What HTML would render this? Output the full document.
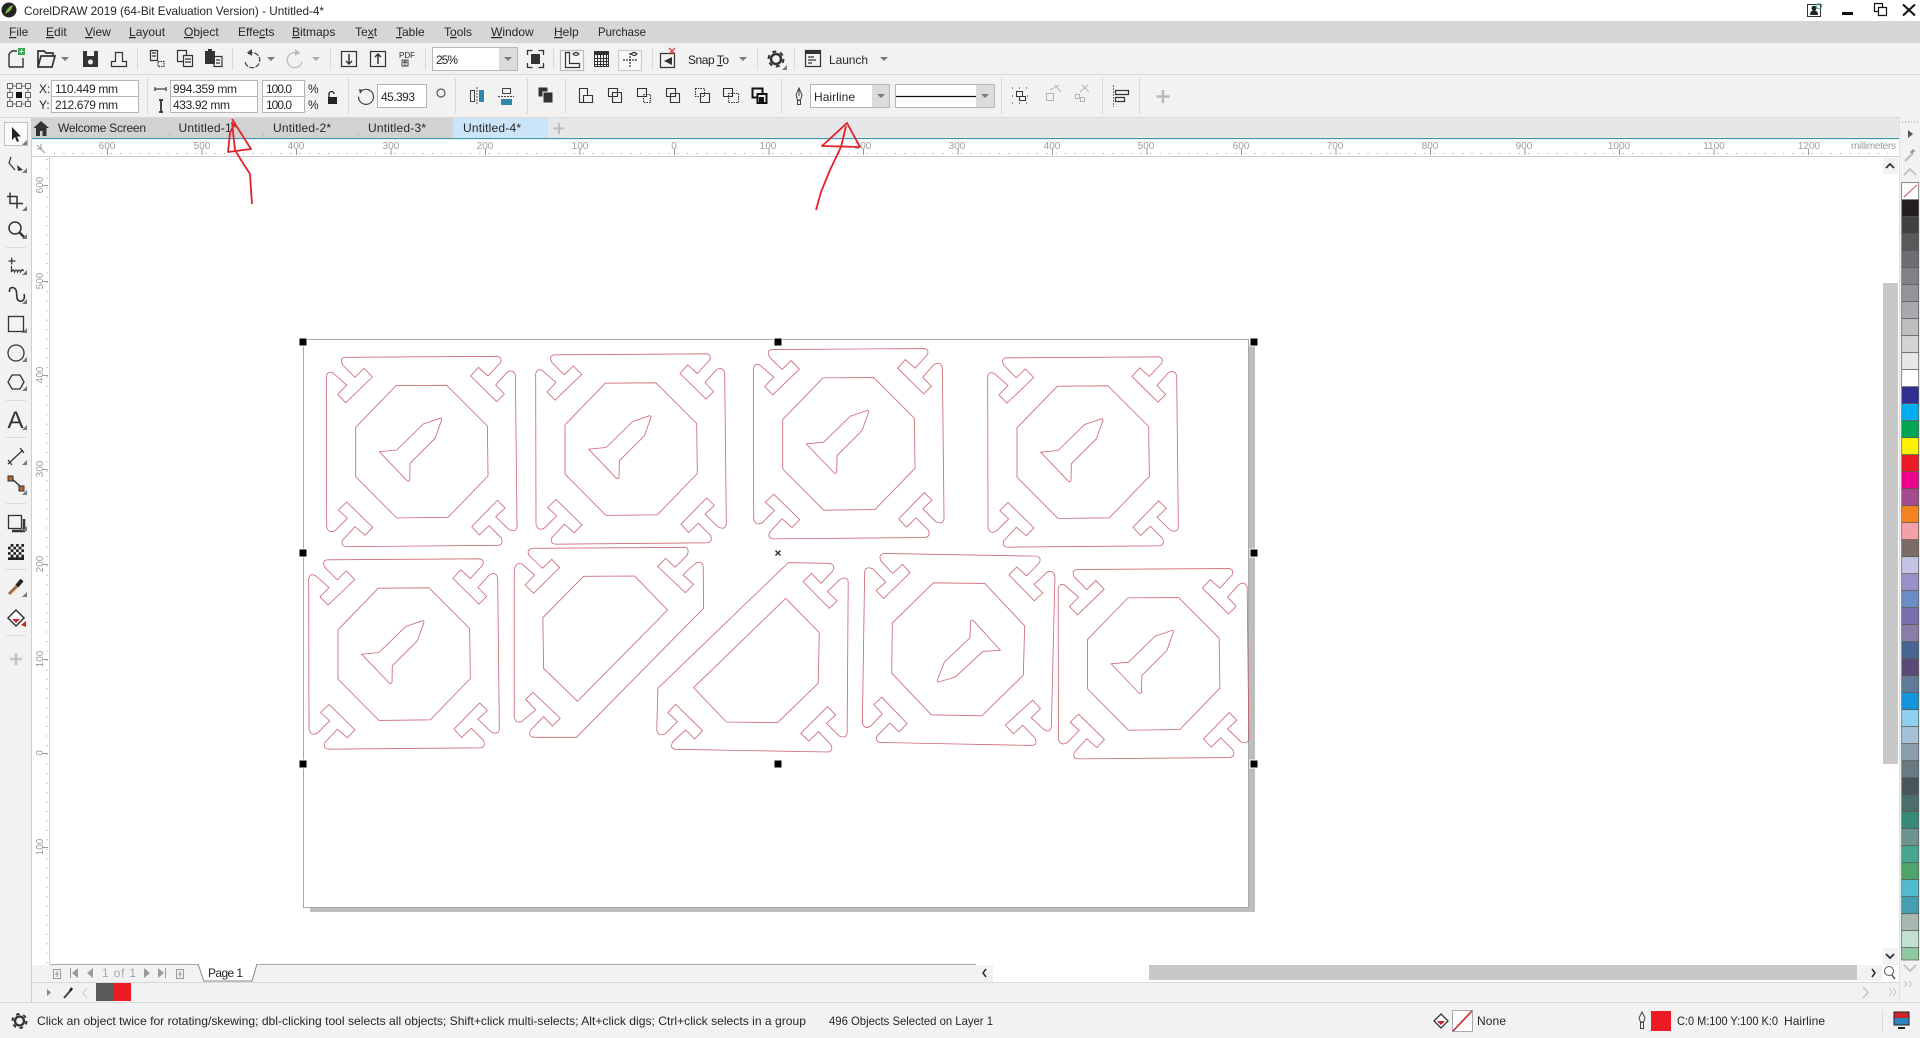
<!DOCTYPE html>
<html><head><meta charset="utf-8"><title>CorelDRAW 2019</title>
<style>
html,body{margin:0;padding:0;background:#fff;width:1920px;height:1038px;overflow:hidden}
svg{display:block}
text{font-family:"Liberation Sans",sans-serif;font-size:12px;fill:#262626}
.r{font-size:10px;fill:#9c9c9c;text-anchor:middle}
.u{text-decoration:underline}
.s{stroke:#333;fill:none;stroke-width:1.2}
.cut{fill:none;stroke:#c4505c;stroke-width:.85;stroke-opacity:.85;vector-effect:non-scaling-stroke}
.sep{stroke:#d9d9d9;stroke-width:1}
</style></head><body>
<svg xmlns="http://www.w3.org/2000/svg" width="1920" height="1038" viewBox="0 0 1920 1038">
<defs>
<path id="dd" d="M-4-2h8l-4 4z" fill="#7a7a7a"/>
<path id="ct" d="M0 0v-5l-5 5z" fill="#777"/>
<g id="t" transform="scale(.33333) translate(-395,-364.5)">
<path class="cut" d="M165 82L622 79Q637 82 631 98L594 138L565 112L542 138L620 215L643 192L617 165L650 128Q668 115 676 135L681 590Q678 608 657 599L617 560L645 534L622 511L545 590L568 615L597 587L633 623Q642 642 625 646L170 650Q150 648 158 630L195 590L225 616L248 592L170 516L145 540L172 565L135 602Q115 612 110 590L109 140Q112 120 130 130L170 165L143 193L167 218L247 141L222 115L195 142L158 105Q147 85 165 82Z"/>
<path class="cut" d="M318 167L470 166L592 288L594 438L474 562L320 564L197 440L197 292Z"/>
<path class="cut" d="M450 265Q457 264 454 272L435 325L360 400L359 450Q356 456 351 452L268 365L320 360L400 282Z"/>
</g>
</defs>

<!-- base bands -->
<rect width="1920" height="21" fill="#fff"/>
<rect y="21" width="1920" height="22" fill="#d6d6d6"/>
<rect y="43" width="1920" height="74" fill="#f2f2f2"/>
<path d="M0 74.5H1920M0 117.5H1920" stroke="#d9d9d9"/>
<rect y="118" width="1899" height="20" fill="#e6e7e8"/>
<rect x="0" y="118" width="32" height="884" fill="#f2f2f2"/>
<path d="M31.5 118V1002" stroke="#d0d0d0"/>

<!-- title bar -->
<circle cx="9" cy="10" r="7.5" fill="#222"/>
<path d="M5 14Q7 7 13 5Q12 11 5 14z" fill="#7fbf3f"/>
<text x="24" y="15" textLength="300" lengthAdjust="spacingAndGlyphs">CorelDRAW 2019 (64-Bit Evaluation Version) - Untitled-4*</text>
<rect x="1807.5" y="4.5" width="13" height="12" fill="#fff" stroke="#333"/>
<path d="M1810 15q0-4 3-4.5a2.5 2.5 0 1 1 2 0q3 .5 3 4.5z" fill="#222"/>
<path d="M1817.500 3.500a2.800 2.800 0 1 0 3 0M1819 2.500v3" fill="none" stroke="#4caf7a"/>
<rect x="1842" y="12" width="11" height="3" fill="#111"/>
<path d="M1874.5 3.5h8v8h-8z" fill="none" stroke="#111" stroke-width="1.2"/>
<path d="M1878.5 7.5h8v8h-8z" fill="#fff" stroke="#111" stroke-width="1.2"/>
<path d="M1903 4.5l12 11M1915 4.5l-12 11" stroke="#111" stroke-width="2"/>

<!-- menu -->
<g>
<text x="9" y="36"><tspan class="u">F</tspan>ile</text>
<text x="46" y="36"><tspan class="u">E</tspan>dit</text>
<text x="85" y="36"><tspan class="u">V</tspan>iew</text>
<text x="129" y="36"><tspan class="u">L</tspan>ayout</text>
<text x="184" y="36"><tspan class="u">O</tspan>bject</text>
<text x="238" y="36">Effe<tspan class="u">c</tspan>ts</text>
<text x="292" y="36"><tspan class="u">B</tspan>itmaps</text>
<text x="355" y="36">Te<tspan class="u">x</tspan>t</text>
<text x="396" y="36"><tspan class="u">T</tspan>able</text>
<text x="444" y="36">T<tspan class="u">o</tspan>ols</text>
<text x="491" y="36"><tspan class="u">W</tspan>indow</text>
<text x="554" y="36"><tspan class="u">H</tspan>elp</text>
<text x="598" y="36" textLength="48" lengthAdjust="spacingAndGlyphs">Purchase</text>
</g>

<!-- toolbar 1 -->
<g class="s">
<path d="M9 67V54l3-3h5M23 58v9H9" stroke-width="1.400"/>
<path d="M38 67V51h6l2 2h7v3M38 67l3-11h14l-3 11z" fill="#f2f2f2" stroke-width="1.700"/>
<path d="M111.500 66.500h15v-5h-4v-9h-7v9h-4z"/>
<path d="M150.500 50.500h7v10h-7z"/><path d="M158 61.500h6v5h-6z" stroke-dasharray="1.500 1"/><path d="M152 53h4M152 56h4"/>
<path d="M177.500 50.500h9v11h-9z"/><path d="M183.500 55.500h9v11h-9z" fill="#f2f2f2"/><path d="M185 59h6M185 62h6"/>
<path d="M214 56.500h8v10h-8z" fill="#f2f2f2"/><path d="M216 60h4M216 63h4"/>
<rect x="341.500" y="51.500" width="15" height="15"/><rect x="370.500" y="51.500" width="15" height="15"/>
<path d="M349 54v10M346 61l3 3 3-3M378 64V54M375 57l3-3 3 3" stroke-width="1.500"/>
<rect x="560.500" y="50.500" width="23" height="20" stroke="#bbb" fill="#f6f6f6"/>
<rect x="618.500" y="50.500" width="23" height="20" stroke="#ccc" fill="#f9f9f9"/>
<path d="M565.500 52.500v15h14v-4h-10v-11z"/>
<path d="M573 54q3-3 6 0q-3 3-6 0z"/>
<path d="M630 53v14M623 60h14" stroke-dasharray="2 1"/>
<path d="M631 54q3-3 6 0q-3 3-6 0z"/>
<path d="M660.500 53.500h14v14h-14z"/>
<rect x="805.500" y="50.500" width="15" height="16"/><path d="M805 52.500h15" stroke-width="3"/><path d="M808 57h6M808 60h8M808 63h4"/>
</g>
<path d="M672 57l-8 4 8 4z" fill="#333"/>
<path d="M669 48l6 6M675 48l-6 6" stroke="#e0413f" stroke-width="1.300"/>
<rect x="83" y="51" width="15" height="16" fill="#333"/><rect x="87" y="51" width="7" height="5" fill="#f2f2f2"/><circle cx="90.500" cy="62" r="2.500" fill="#f2f2f2"/>
<rect x="18" y="48" width="7" height="7" fill="#3aa655"/><path d="M21.500 49.500v4M19.500 51.500h4" stroke="#fff"/>
<rect x="205" y="51" width="10" height="13" fill="#333"/><rect x="208" y="49" width="4" height="3" fill="#333"/>
<use href="#dd" x="65" y="59"/><use href="#dd" x="271" y="59"/><use href="#dd" x="316" y="59" opacity=".6"/><use href="#dd" x="743" y="59"/><use href="#dd" x="884" y="59"/>
<path d="M248 54a7.500 7.500 0 1 1-3 8" fill="none" stroke="#444" stroke-width="1.200" stroke-dasharray="5 1.500"/><path d="M252 49v7l-5-3.500z" fill="#444"/>
<path d="M299 54a7.500 7.500 0 1 0 3 8" fill="none" stroke="#bbb" stroke-width="1.200"/><path d="M295 49v7l5-3.500z" fill="#bbb"/>
<text x="399" y="58" style="font-size:8px">PDF</text><rect x="402" y="60" width="6" height="6" fill="none" stroke="#444"/><path d="M405 66v-5M403 63l2-2 2 2" stroke="#444" fill="none"/>
<rect x="432.500" y="47.500" width="85" height="23" fill="#fff" stroke="#b8b8b8"/>
<rect x="499" y="48" width="18" height="22" fill="#dcdcdc"/><use href="#dd" x="508" y="59"/>
<text x="436" y="64" textLength="22">25%</text>
<rect x="531" y="54" width="9" height="10" fill="#333"/>
<path d="M527.500 55v-4.500h5M543.500 55v-4.500h-5M527.500 63v4.500h5M543.500 63v4.500h-5" fill="none" stroke="#333" stroke-width="1.300"/>
<rect x="594" y="51" width="15" height="4" fill="#333"/>
<path d="M594.500 51v16M597.500 51v16M600.500 51v16M603.500 51v16M606.500 51v16M608.500 51v16M594 58.500h15M594 61.500h15M594 64.500h15M594 66.500h15" fill="none" stroke="#333"/>
<text x="688" y="64" textLength="41">Snap <tspan class="u">T</tspan>o</text>
<circle cx="776" cy="59" r="5" fill="none" stroke="#333" stroke-width="2.500"/>
<circle cx="776" cy="59" r="7.500" fill="none" stroke="#333" stroke-width="2" stroke-dasharray="4 3.850"/>
<use href="#ct" x="787" y="70"/>
<text x="829" y="64" textLength="39">Launch</text>
<path d="M137.500 48V70M232.500 48V70M330.500 48V70M425.500 48V70M553.500 48V70M652.500 48V70M757.500 48V70M794.500 48V70" class="sep"/>

<!-- property bar -->
<g fill="none" stroke="#666" stroke-width="1">
<path d="M7.500 83.500h5v5h-5zM16.500 83.500h5v5h-5zM25.500 83.500h5v5h-5zM7.500 92.500h5v5h-5zM25.500 92.500h5v5h-5zM7.500 101.500h5v5h-5zM16.500 101.500h5v5h-5zM25.500 101.500h5v5h-5zM12.500 86h4M21.500 86h4M12.500 104h4M21.500 104h4M10 88.500v4M10 97.500v4M28 88.500v4M28 97.500v4"/>
</g>
<rect x="16" y="92" width="6" height="6" fill="#111"/>
<text x="39" y="93">X:</text><text x="39" y="109">Y:</text>
<g fill="#fff" stroke="#b5b5b5">
<rect x="51.500" y="80.500" width="87" height="16"/><rect x="51.500" y="96.500" width="87" height="16"/>
<rect x="170.500" y="80.500" width="87" height="16"/><rect x="170.500" y="96.500" width="87" height="16"/>
<rect x="262.500" y="80.500" width="42" height="16"/><rect x="262.500" y="96.500" width="42" height="16"/>
<rect x="377.500" y="84.500" width="49" height="23"/>
<rect x="810.500" y="84.500" width="79" height="23"/>
<rect x="895.500" y="84.500" width="99" height="23"/>
</g>
<text x="55" y="93" textLength="63">110.449 mm</text><text x="55" y="109" textLength="63">212.679 mm</text>
<text x="173" y="93" textLength="64">994.359 mm</text><text x="173" y="109" textLength="57">433.92 mm</text>
<text x="266" y="93" textLength="26">100.0</text><text x="266" y="109" textLength="26">100.0</text>
<text x="308" y="93">%</text><text x="308" y="109">%</text>
<path d="M155 89h11M155 87v4M166 87v4" stroke="#444" stroke-width="1.300" fill="none"/>
<path d="M161 100v12M159 100h4M159 112h4" stroke="#333" stroke-width="1.800" fill="none"/>
<rect x="328" y="97" width="9" height="7" fill="#222"/><path d="M329 97v-3a2.500 2.500 0 0 1 5 0" fill="none" stroke="#222" stroke-width="1.300"/>
<path d="M362 90.500a7.500 7.500 0 1 1-3.500 6" fill="none" stroke="#444" stroke-width="1.200"/><path d="M359 89l4 1-3 4z" fill="#444"/>
<text x="381" y="101" textLength="34">45.393</text>
<circle cx="441" cy="93" r="4" fill="none" stroke="#555" stroke-width="1.200"/>
<path d="M470.500 90.500h4v11h-4z" fill="none" stroke="#444"/><rect x="479" y="90" width="5" height="12" fill="#2e86ab"/><path d="M477 87v18" stroke="#555" stroke-dasharray="2 1"/>
<path d="M502.500 88.500h8v5h-8z" fill="none" stroke="#444"/><rect x="501" y="99" width="11" height="6" fill="#2e86ab"/><path d="M498 96.500h16" stroke="#444" stroke-dasharray="2 1"/>
<rect x="538.500" y="87.500" width="9" height="9" fill="#333"/><rect x="543" y="92" width="10" height="11" fill="#333" stroke="#f2f2f2"/>
<g fill="none" stroke="#333" stroke-width="1.100">
<path d="M579.500 88.500h8v7h-4v7h-4z M587.500 95.500h5v7h-9"/>
<path d="M608.500 88.500h9v8h-9z"/><path d="M612.500 92.500h9v10h-9z"/>
<path d="M637.500 88.500h9v8h-9z"/><path d="M643.500 94.500h7v8h-7z" stroke-dasharray="1.500 1"/>
<path d="M666.500 88.500h9v8h-9z"/><path d="M670.500 93.500h9v9h-9z"/>
<path d="M695.500 88.500h9v8h-9z" stroke-dasharray="1.500 1"/><path d="M700.500 93.500h9v9h-9z"/>
<path d="M723.500 88.500h9v8h-9z"/><path d="M728.500 93.500h10v9h-10z" stroke-dasharray="1.500 1"/>
</g>
<rect x="752.500" y="88.500" width="10" height="9" fill="#f2f2f2" stroke="#111" stroke-width="2"/><rect x="757.500" y="94" width="9" height="9" fill="#f2f2f2" stroke="#111" stroke-width="2"/><rect x="759" y="97" width="5" height="5" fill="#111"/>
<path d="M799 88l-3 7 1.500 5h3l1.500-5zM797.500 100.500h3v4h-3zM799 88v8" fill="none" stroke="#444"/>
<rect x="872" y="85" width="17" height="22" fill="#dcdcdc"/><use href="#dd" x="881" y="96"/>
<text x="814" y="101" textLength="41">Hairline</text>
<rect x="976" y="85" width="18" height="22" fill="#dcdcdc"/><use href="#dd" x="985" y="96"/>
<path d="M896 96.500H976" stroke="#111" stroke-width="1.300"/>
<g fill="none" stroke="#333">
<path d="M1016.500 91.500h6v5h-6zM1019.500 96.500h6v4h-6z"/>
<path d="M1012 88h1M1019 88h1M1026 88h1M1012 96h1M1027 96h1M1012 103h1M1019 103h1M1026 103h1" stroke-width="1"/>
</g>
<g fill="none" stroke="#b5b5b5">
<path d="M1046.500 93.500h7v7h-7zM1050 90l9-5M1055 85l6 7"/>
<path d="M1075.500 94.500h4v4h-4zM1080.500 97.500h4v4h-4zM1080 92l8-7M1082 85l7 7"/>
</g>
<path d="M1113.500 85v22" stroke="#2e86ab" stroke-dasharray="2 1"/>
<path d="M1115.500 90.500h13v4h-13zM1115.500 97.500h9v4h-9z" fill="none" stroke="#333" stroke-width="1.200"/>
<path d="M1163 90v13M1156.500 96.500h13" stroke="#b8b8b8" stroke-width="2.500"/>
<path d="M147.500 78V114M348.500 78V114M455.500 78V114M527.500 78V114M565.500 78V114M781.500 78V114M1001.500 78V114M1102.500 78V114M1139.500 78V114" class="sep"/>

<!-- tabs -->
<rect x="32" y="118" width="421" height="20" fill="#d2d2d2"/>
<rect x="453" y="118" width="95" height="20" fill="#cce4f7"/>
<path d="M169.500 133V138M263.500 133V138M358.500 133V138" stroke="#c0c0c0"/>
<path d="M41 121l-7.500 7h2.500v8h4v-5h2.500v5h4v-8h2.500z" fill="#333"/>
<text x="58" y="132" textLength="88">Welcome Screen</text>
<text x="178.500" y="132" textLength="58">Untitled-1*</text>
<text x="273" y="132" textLength="58">Untitled-2*</text>
<text x="368" y="132" textLength="58">Untitled-3*</text>
<text x="463" y="132" textLength="58">Untitled-4*</text>
<path d="M559 123v11M553.500 128.500h11" stroke="#bdbdbd" stroke-width="2"/>
<rect x="32" y="138" width="1867" height="1" fill="#3a9aa6"/>
<rect x="32" y="139" width="1867" height="1" fill="#e3f3f5"/>

<!-- rulers -->
<path d="M32 156.500H1899" stroke="#cfcfcf"/>
<path d="M31.500 140V982" stroke="#cfcfcf"/>
<path d="M49.500 157V964" stroke="#cfcfcf"/>
<path d="M50 153.500H1896" stroke="#999" stroke-dasharray="1 8.450" stroke-dashoffset="-4"/>
<path d="M47 157V964" stroke="#999" stroke-dasharray="1 8.450" stroke-dashoffset="-2" stroke-width="1"/>
<path d="M107.500 149v6M202 149v6M296.500 149v6M391 149v6M485.500 149v6M580 149v6M674.500 149v6M769 149v6M863.500 149v6M958 149v6M1052.500 149v6M1147 149v6M1241.500 149v6M1336 149v6M1430.500 149v6M1525 149v6M1619.500 149v6M1714 149v6M1808.500 149v6" stroke="#999" fill="none"/>
<path d="M42 185.500h6M42 281.500h6M42 375.500h6M42 469.500h6M42 564.500h6M42 659.500h6M42 753.500h6M42 847.500h6" stroke="#999"/>
<text class="r" x="107" y="149">600</text><text class="r" x="202" y="149">500</text><text class="r" x="296" y="149">400</text><text class="r" x="391" y="149">300</text><text class="r" x="485" y="149">200</text><text class="r" x="580" y="149">100</text><text class="r" x="674" y="149">0</text><text class="r" x="768" y="149">100</text><text class="r" x="863" y="149">200</text><text class="r" x="957" y="149">300</text><text class="r" x="1052" y="149">400</text><text class="r" x="1146" y="149">500</text><text class="r" x="1241" y="149">600</text><text class="r" x="1335" y="149">700</text><text class="r" x="1430" y="149">800</text><text class="r" x="1524" y="149">900</text><text class="r" x="1619" y="149">1000</text><text class="r" x="1714" y="149">1100</text><text class="r" x="1809" y="149">1200</text>
<text x="1851" y="149" style="font-size:10px;fill:#9c9c9c" textLength="45">millimeters</text>
<g>
<text class="r" transform="translate(43,185) rotate(-90)">600</text><text class="r" transform="translate(43,281) rotate(-90)">500</text><text class="r" transform="translate(43,375) rotate(-90)">400</text><text class="r" transform="translate(43,469) rotate(-90)">300</text><text class="r" transform="translate(43,564) rotate(-90)">200</text><text class="r" transform="translate(43,659) rotate(-90)">100</text><text class="r" transform="translate(43,753) rotate(-90)">0</text><text class="r" transform="translate(43,847) rotate(-90)">100</text>
</g>
<path d="M37 145l8 8M37 149h5M41 144v5" stroke="#999" fill="none"/>

<!-- left toolbox -->
<rect x="4.500" y="122.500" width="23" height="23" fill="#fafafa" stroke="#c0c0c0"/>
<path d="M12 127v13l3-3 2 5 2-1-2-4.500h4z" fill="#222"/><use href="#ct" x="27" y="145"/>
<g fill="none" stroke="#333" stroke-width="1.200">
<path d="M11 157l-2 6 6 7"/>
<path d="M10 192.500v11h13M7 196.500h10v12" stroke-width="1.500"/>
<circle cx="15" cy="228" r="6" stroke-width="1.500"/><path d="M19.500 232.500l5 5" stroke-width="2.500"/>
<path d="M8.500 261h7M11.700 257.500v7M11.500 266v6q2-4 3 0q2-4 3 0q2-4 3 0q2-4 3-1" />
<path d="M9.500 292Q9 287.500 12.500 287.500Q16 288 16.500 292L17 298Q18 302 22 301Q25.500 299 24 294" stroke-width="1.600"/>
<rect x="8.500" y="316.500" width="15" height="15" stroke-width="1.300"/>
<circle cx="16" cy="353" r="8" stroke-width="1.300"/>
<path d="M12 375h8l4 7-4 7h-8l-4-7z" stroke-width="1.300"/>
<path d="M8 464l15-14M8 460l4 5M20 448l4 5"/>
<path d="M11 478l10 9" stroke-width="1.500"/>
<rect x="8.500" y="515.500" width="13" height="13" stroke-width="1.300"/>
<path d="M12 531h12v-12" stroke-width="2.500"/>
</g>
<path d="M17 165l6 5-5 1z" fill="#333"/>
<text x="7.500" y="428" style="font-size:24px;fill:#333">A</text>
<rect x="8" y="476" width="5" height="5" fill="#b5672f" stroke="#333"/><rect x="19" y="486" width="5" height="5" fill="#b5672f" stroke="#333"/>
<rect x="8" y="544" width="16" height="16" fill="#222"/>
<path d="M8 544h2.700v2.700H8zM13.400 544h2.700v2.700h-2.700zM18.700 544h2.700v2.700h-2.700zM10.700 546.700h2.700v2.700h-2.700zM16 546.700h2.700v2.700H16zM21.400 546.700H24v2.700h-2.600zM8 549.400h2.700v2.700H8zM13.400 549.400h2.700v2.700h-2.700zM18.700 549.400h2.700v2.700h-2.700zM10.700 552h2.700v2.700h-2.700zM16 552h2.700v2.700H16zM21.400 552H24v2.700h-2.600zM8 554.700h2.700v2.700H8zM13.400 554.700h2.700v2.700h-2.700zM18.700 554.700h2.700v2.700h-2.700z" fill="#eee"/>
<path d="M9 594l9-9" stroke="#a8663a" stroke-width="3"/><path d="M17 586l5-6" stroke="#222" stroke-width="4"/>
<path d="M8 618l8-8 8 8-8 8z" fill="#fff" stroke="#333" stroke-width="1.500"/><path d="M12 619h8l-4 4z" fill="#c8202c"/><path d="M21 625l5-4v6z" fill="#c8202c"/>
<path d="M16 653v12M10 659h12" stroke="#c4c4c4" stroke-width="2.500"/>
<use href="#ct" x="27" y="173"/><use href="#ct" x="27" y="211"/><use href="#ct" x="27" y="239"/><use href="#ct" x="27" y="275"/><use href="#ct" x="27" y="304"/><use href="#ct" x="27" y="333"/><use href="#ct" x="27" y="362"/><use href="#ct" x="27" y="391"/><use href="#ct" x="27" y="430"/><use href="#ct" x="27" y="465"/><use href="#ct" x="27" y="495"/><use href="#ct" x="27" y="531"/><use href="#ct" x="27" y="597"/>
<path d="M6 247.500h20M6 400.500h20M6 437.500h20M6 503.500h20M6 569.500h20M6 635.500h20" class="sep"/>

<!-- page -->
<rect x="310" y="345" width="945" height="567" fill="#bdbdbd"/>
<rect x="303.500" y="339.500" width="945" height="568" fill="#fff" stroke="#a8a8a8"/>

<!-- artwork -->
<use href="#t" transform="translate(421.700,451.500)"/>
<use href="#t" transform="translate(631,449)"/>
<use href="#t" transform="translate(848.700,443.700)"/>
<use href="#t" transform="translate(1083,452)"/>
<use href="#t" transform="translate(404,654)"/>
<use href="#t" transform="translate(958,649.300) rotate(181.500)"/>
<use href="#t" transform="translate(1153.500,663.700)"/>
<g transform="translate(290,540) scale(.35714,.33333)">
<path class="cut" d="M680 25L1105 22Q1120 25 1112 46L1078 82L1052 55L1030 80L1107 158L1130 133L1100 105L1135 70Q1155 60 1157 80L1158 205L802 592L685 592Q665 590 674 570L710 530L735 558L757 535L680 457L660 478L688 510L648 545Q632 552 628 530L628 90Q632 65 650 72L685 105L658 135L682 160L755 83L733 58L707 85L670 47Q660 28 680 25Z"/>
<path class="cut" d="M822 109L965 108L1057 210L805 484L710 385L708 233Z"/>
<path class="cut" d="M1395 68L1510 70Q1530 75 1518 95L1487 130L1460 100L1437 125L1510 205L1532 183L1505 155L1540 118Q1560 108 1563 125L1560 580Q1557 597 1538 588L1502 550L1528 525L1505 500L1430 580L1453 603L1480 575L1515 615Q1522 635 1505 636L1080 628Q1062 625 1072 605L1108 570L1133 597L1155 572L1080 493L1058 518L1085 545L1050 582Q1030 590 1027 570L1030 445Z"/>
<path class="cut" d="M1388 175L1482 278L1479 430L1365 548L1222 546L1130 443Z"/>
</g>

<!-- handles -->
<g fill="#000" stroke="#fff">
<rect x="299" y="338" width="8" height="8"/><rect x="774" y="338" width="8" height="8"/><rect x="1250" y="338" width="8" height="8"/>
<rect x="299" y="549" width="8" height="8"/><rect x="1250" y="549" width="8" height="8"/>
<rect x="299" y="760" width="8" height="8"/><rect x="774" y="760" width="8" height="8"/><rect x="1250" y="760" width="8" height="8"/>
</g>
<path d="M775.500 550.500l5 5M780.500 550.500l-5 5" stroke="#333" stroke-width="1.500"/>

<!-- hand-drawn arrows -->
<g fill="none" stroke="#e3222b" stroke-width="1.800" stroke-linejoin="round">
<path d="M232 119L251 149L228 152L230 133L235 122"/>
<path d="M232 122L235 150L241 160L250 174L251 190L252 204"/>
<path d="M847 123L822 146L860 147Z"/>
<path d="M846 126L841 147L830 170L821 192L816 210"/>
</g>

<!-- vertical scrollbar -->
<rect x="1883" y="283" width="15" height="481" fill="#c8c8c8"/>
<rect x="1883" y="158" width="15" height="16" fill="#f2f2f2"/>
<path d="M1886 168l4-4 4 4" fill="none" stroke="#333" stroke-width="1.800"/>
<rect x="1883" y="948" width="15" height="17" fill="#f2f2f2"/>
<path d="M1886 954l4 4 4-4" fill="none" stroke="#333" stroke-width="1.800"/>

<!-- palette -->
<rect x="1899" y="117" width="21" height="885" fill="#f2f2f2"/>
<path d="M1899.500 117V1002" stroke="#e0e0e0"/>
<path d="M1902 122h16" stroke="#999" stroke-dasharray="1 2"/>
<path d="M1908 130v8l5-4z" fill="#555"/>
<path d="M1905 161l8-8" stroke="#bbb" stroke-width="2"/><path d="M1911 153l3-3" stroke="#999" stroke-width="3"/>
<path d="M1904 175l6-6 6 6" fill="none" stroke="#c4c4c4" stroke-width="2"/>
<g stroke="#5a5a5a" stroke-width=".7">
<rect x="1901.700" y="182.700" width="17" height="17" fill="#fff"/>
<rect x="1901.700" y="199.700" width="17" height="17" fill="#231f20"/>
<rect x="1901.700" y="216.700" width="17" height="17" fill="#414042"/>
<rect x="1901.700" y="233.700" width="17" height="17" fill="#58595b"/>
<rect x="1901.700" y="250.700" width="17" height="17" fill="#6d6e71"/>
<rect x="1901.700" y="267.700" width="17" height="17" fill="#808285"/>
<rect x="1901.700" y="284.700" width="17" height="17" fill="#939598"/>
<rect x="1901.700" y="301.700" width="17" height="17" fill="#a7a9ac"/>
<rect x="1901.700" y="318.700" width="17" height="17" fill="#bcbec0"/>
<rect x="1901.700" y="335.700" width="17" height="17" fill="#d1d3d4"/>
<rect x="1901.700" y="352.700" width="17" height="17" fill="#e6e7e8"/>
<rect x="1901.700" y="369.700" width="17" height="17" fill="#ffffff"/>
<rect x="1901.700" y="386.700" width="17" height="17" fill="#2e3192"/>
<rect x="1901.700" y="403.700" width="17" height="17" fill="#00aeef"/>
<rect x="1901.700" y="420.700" width="17" height="17" fill="#00a651"/>
<rect x="1901.700" y="437.700" width="17" height="17" fill="#fff200"/>
<rect x="1901.700" y="454.700" width="17" height="17" fill="#ed1c24"/>
<rect x="1901.700" y="471.700" width="17" height="17" fill="#ec008c"/>
<rect x="1901.700" y="488.700" width="17" height="17" fill="#a54b8f"/>
<rect x="1901.700" y="505.700" width="17" height="17" fill="#f58220"/>
<rect x="1901.700" y="522.700" width="17" height="17" fill="#f4a0a8"/>
<rect x="1901.700" y="539.700" width="17" height="17" fill="#7d6b66"/>
<rect x="1901.700" y="556.700" width="17" height="17" fill="#c5c3e5"/>
<rect x="1901.700" y="573.700" width="17" height="17" fill="#9a8fc6"/>
<rect x="1901.700" y="590.700" width="17" height="17" fill="#6b8dc6"/>
<rect x="1901.700" y="607.700" width="17" height="17" fill="#7a6db0"/>
<rect x="1901.700" y="624.700" width="17" height="17" fill="#8a7ea8"/>
<rect x="1901.700" y="641.700" width="17" height="17" fill="#476492"/>
<rect x="1901.700" y="658.700" width="17" height="17" fill="#5a4a78"/>
<rect x="1901.700" y="675.700" width="17" height="17" fill="#5e7c98"/>
<rect x="1901.700" y="692.700" width="17" height="17" fill="#1396de"/>
<rect x="1901.700" y="709.700" width="17" height="17" fill="#8fd0ee"/>
<rect x="1901.700" y="726.700" width="17" height="17" fill="#a5c2d8"/>
<rect x="1901.700" y="743.700" width="17" height="17" fill="#8aa0ae"/>
<rect x="1901.700" y="760.700" width="17" height="17" fill="#687a82"/>
<rect x="1901.700" y="777.700" width="17" height="17" fill="#47555c"/>
<rect x="1901.700" y="794.700" width="17" height="17" fill="#4b6e6a"/>
<rect x="1901.700" y="811.700" width="17" height="17" fill="#388a78"/>
<rect x="1901.700" y="828.700" width="17" height="17" fill="#6e9490"/>
<rect x="1901.700" y="845.700" width="17" height="17" fill="#46a890"/>
<rect x="1901.700" y="862.700" width="17" height="17" fill="#4fa46c"/>
<rect x="1901.700" y="879.700" width="17" height="17" fill="#50bccc"/>
<rect x="1901.700" y="896.700" width="17" height="17" fill="#44a0b0"/>
<rect x="1901.700" y="913.700" width="17" height="17" fill="#a6b8b0"/>
<rect x="1901.700" y="930.700" width="17" height="17" fill="#c2e0d0"/>
<rect x="1901.700" y="947.700" width="17" height="12.300" fill="#90c8a0"/>
</g>
<path d="M1904 197l13-12" stroke="#c9505c"/>
<path d="M1904 965l6 6 6-6" fill="none" stroke="#c4c4c4" stroke-width="2"/>
<path d="M1904 981l3 3-3 3M1909 981l3 3-3 3" fill="none" stroke="#c4c4c4"/>

<!-- horizontal scroll strip -->
<rect x="32" y="965" width="1850" height="17" fill="#fff"/>
<rect x="32" y="965" width="961" height="17" fill="#f2f2f2"/>
<path d="M50 964.500H976" stroke="#a8a8a8"/>
<rect x="1149" y="965" width="708" height="15" fill="#c8c8c8"/>
<rect x="1857" y="965" width="25" height="16" fill="#f2f2f2"/>
<path d="M198 964L204 981H252L257 964" fill="#fff" stroke="#888"/>
<text x="208" y="977" textLength="35">Page 1</text>
<g fill="none" stroke="#9a9a9a">
<rect x="53.500" y="969.500" width="7" height="9"/><rect x="176.500" y="969.500" width="7" height="9"/>
<path d="M57 971v6M55 974h4M180 971v6M178 974h4"/>
<path d="M70.500 968v10"/><path d="M165.500 968v10"/>
</g>
<path d="M78 968l-6 5 6 5zM93 968l-6 5 6 5zM144 968l6 5-6 5zM158 968l6 5-6 5z" fill="#9a9a9a"/>
<text x="102" y="977" style="fill:#a8a8a8" textLength="34">1 of 1</text>
<path d="M986 969l-3 4 3 4" fill="none" stroke="#333" stroke-width="1.600"/>
<path d="M1872 969l3 4-3 4" fill="none" stroke="#333" stroke-width="1.600"/>
<circle cx="1889" cy="971" r="4.500" fill="none" stroke="#555"/><path d="M1892 975l3 4" stroke="#555" stroke-width="1.500"/>

<!-- doc palette -->
<rect x="0" y="982" width="1899" height="20" fill="#f2f2f2"/>
<path d="M32 982.500H1899" stroke="#d9d9d9"/>
<path d="M31.500 982V1002" stroke="#d0d0d0"/>
<path d="M47 989v7l4-3.500z" fill="#888"/>
<path d="M64 998l6-7" stroke="#444" stroke-width="2"/><path d="M70 991l2-3" stroke="#222" stroke-width="2.500"/>
<path d="M87 988l-4 5 4 5" fill="none" stroke="#c4c4c4"/>
<rect x="96" y="983" width="18" height="18" fill="#58595b"/>
<rect x="114" y="983" width="17" height="18" fill="#ed1c24"/>
<path d="M1863 987l5 5.500-5 5.500" fill="none" stroke="#c4c4c4" stroke-width="1.400"/>
<path d="M1889 988l3 4-3 4M1893 988l3 4-3 4" fill="none" stroke="#c4c4c4"/>

<!-- status -->
<rect x="0" y="1003" width="1920" height="35" fill="#f2f2f2"/>
<path d="M0 1002.500H1920" stroke="#d9d9d9"/>
<circle cx="19.500" cy="1021" r="4.500" fill="none" stroke="#333" stroke-width="2.300"/>
<circle cx="19.500" cy="1021" r="7" fill="none" stroke="#333" stroke-width="2" stroke-dasharray="3.500 3.830"/>
<text x="37" y="1025" textLength="769" lengthAdjust="spacingAndGlyphs">Click an object twice for rotating/skewing; dbl-clicking tool selects all objects; Shift+click multi-selects; Alt+click digs; Ctrl+click selects in a group</text>
<text x="829" y="1025" textLength="164" lengthAdjust="spacingAndGlyphs">496 Objects Selected on Layer 1</text>
<path d="M1434 1021l7-7 7 7-7 7z" fill="#fff" stroke="#333" stroke-width="1.300"/><path d="M1437 1021h8l-4 4z" fill="#c8202c"/>
<rect x="1452.500" y="1010.500" width="20" height="21" fill="#fff" stroke="#aaa"/><path d="M1453 1031l19-20" stroke="#d1232a" stroke-width="1.600"/>
<text x="1477" y="1025" textLength="29">None</text>
<path d="M1642 1012l-3 6 1.500 4h3l1.500-4zM1640.500 1022.500h3v6h-3z" fill="none" stroke="#444"/>
<rect x="1651" y="1011" width="20" height="20" fill="#ed1c24"/>
<text x="1677" y="1025" textLength="101" lengthAdjust="spacingAndGlyphs">C:0 M:100 Y:100 K:0</text>
<text x="1784" y="1025" textLength="41">Hairline</text>
<path d="M1882.500 1010V1032" class="sep"/>
<rect x="1894" y="1012" width="15" height="6" fill="#d1232a"/><rect x="1894" y="1018" width="15" height="7" fill="#2e86c1"/><rect x="1894" y="1012" width="15" height="13" fill="none" stroke="#222"/>
<path d="M1898 1028h7" stroke="#222" stroke-width="2"/>
</svg>
</body></html>
